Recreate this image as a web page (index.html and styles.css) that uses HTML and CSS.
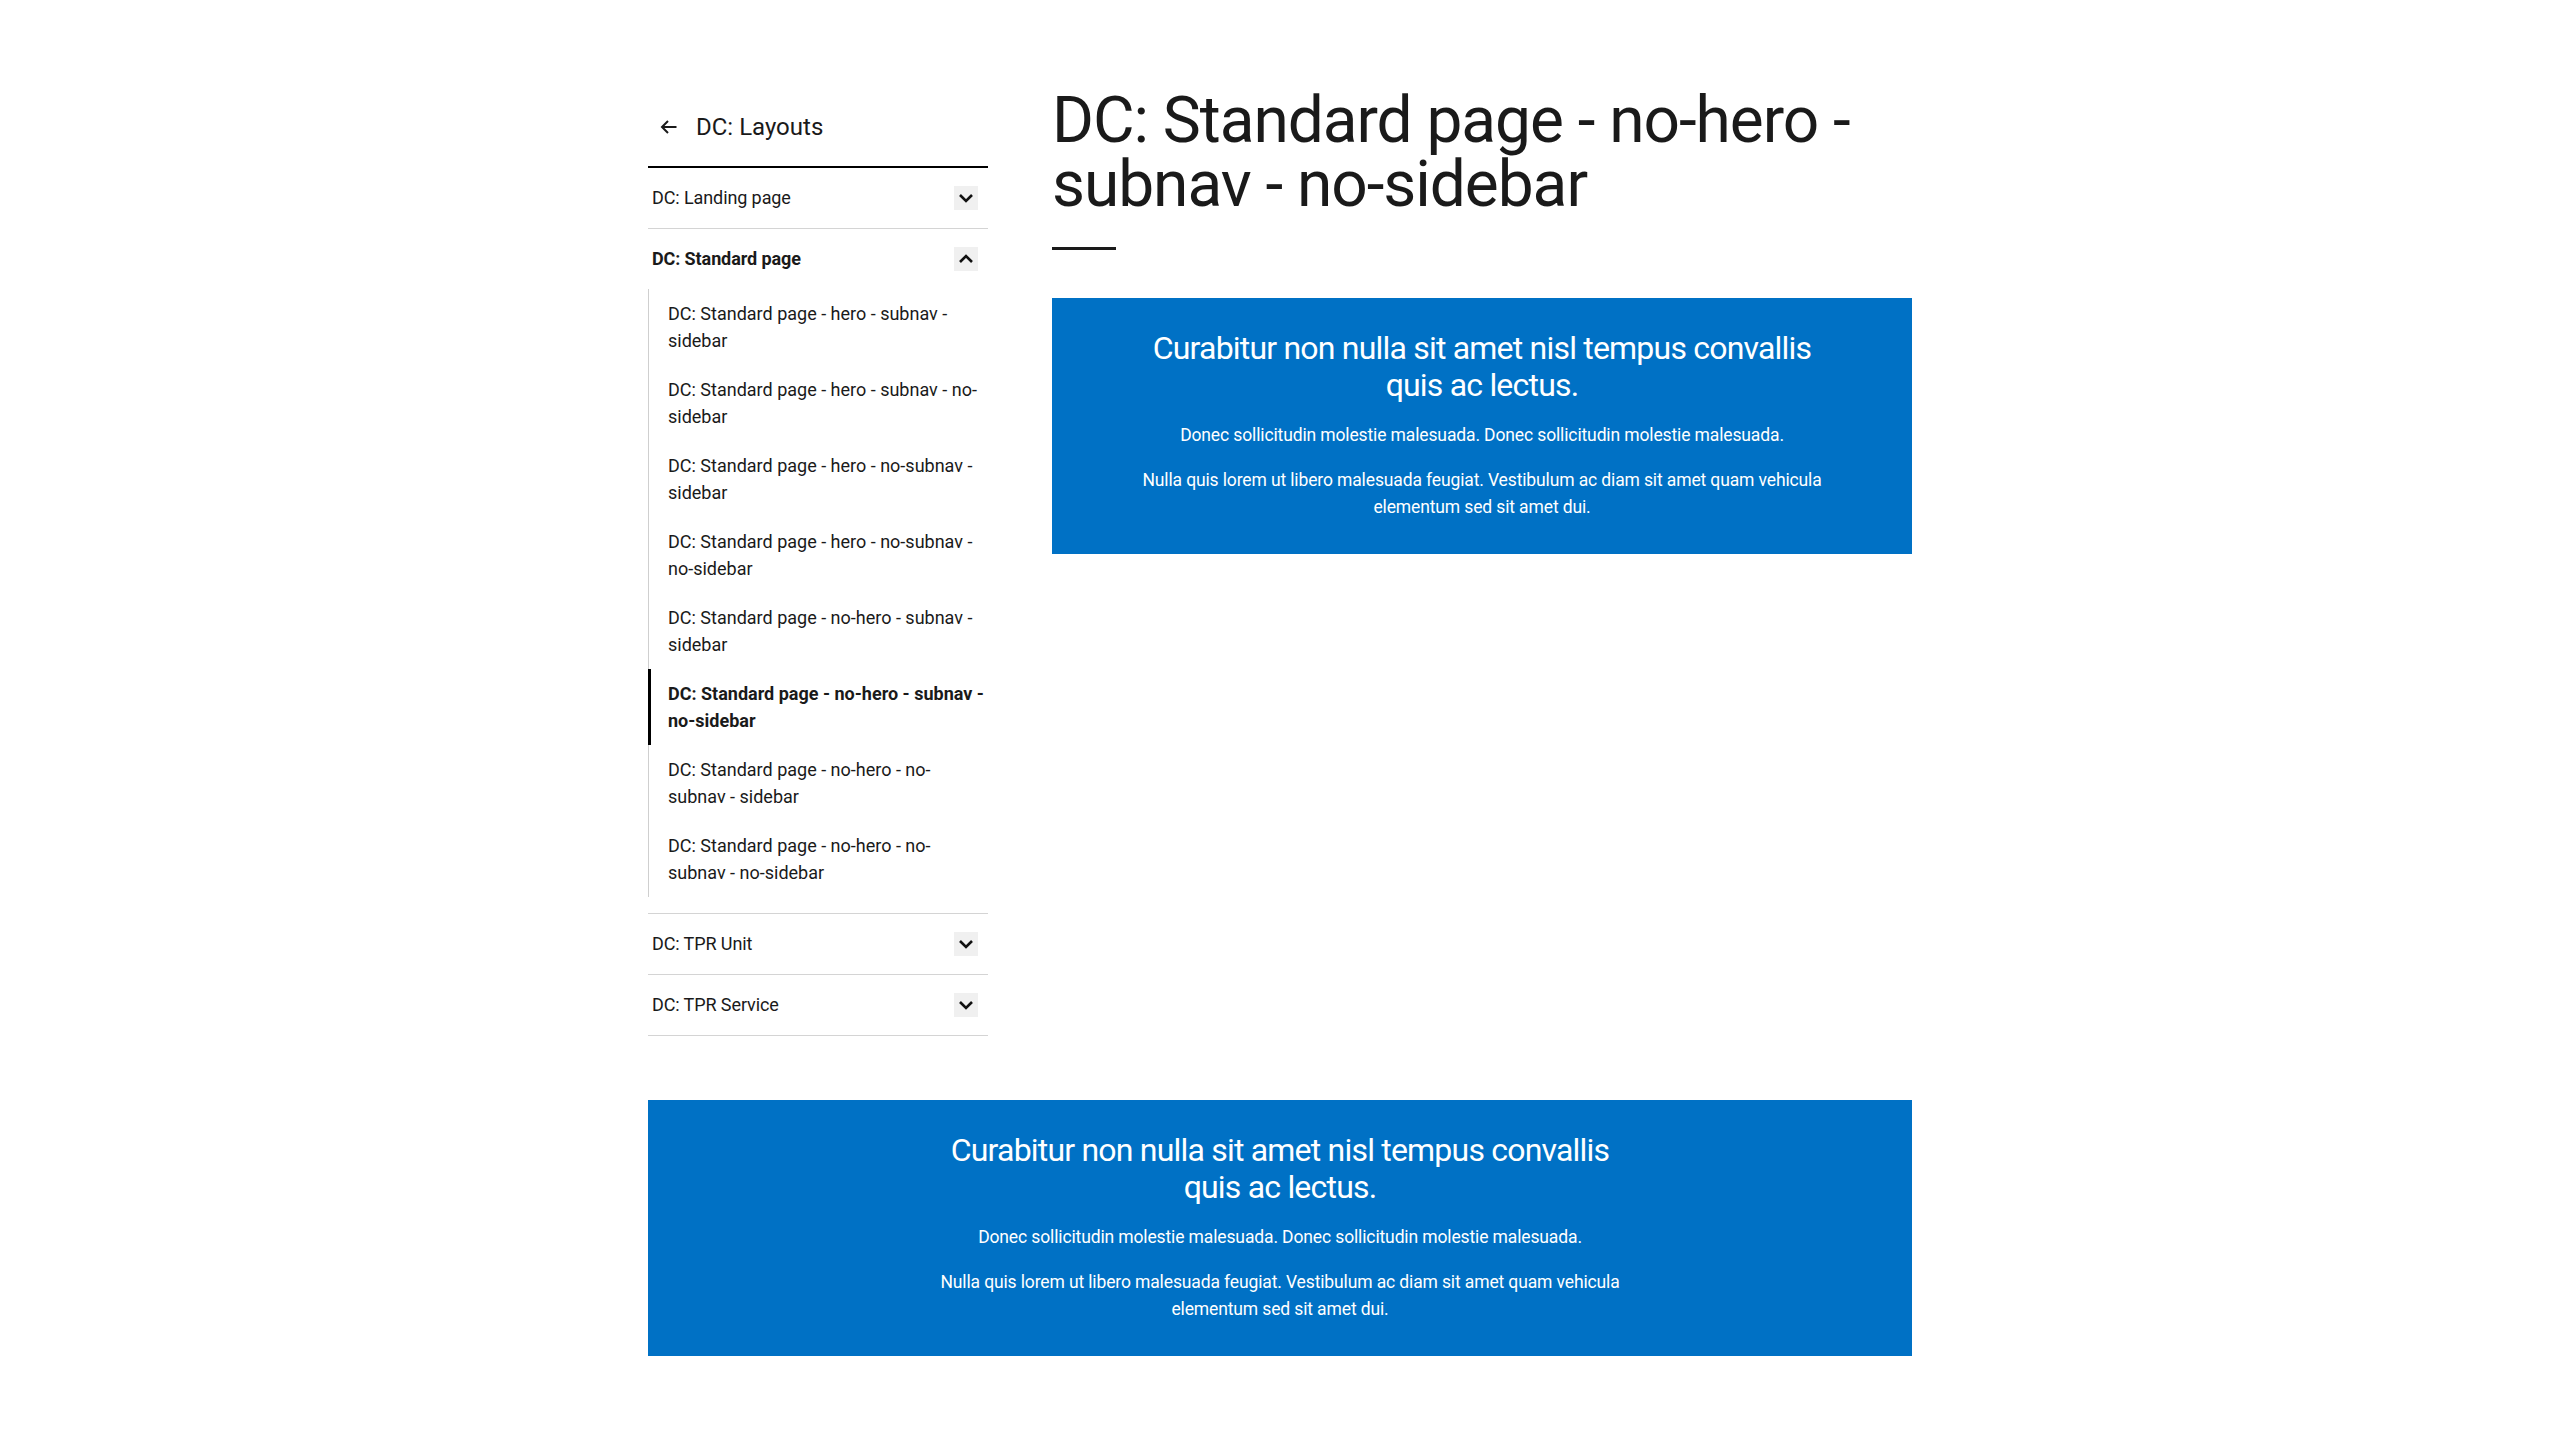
FILE: index.html
```html
<!DOCTYPE html>
<html lang="en">
<head>
<meta charset="utf-8">
<title>DC: Standard page - no-hero - subnav - no-sidebar</title>
<link rel="stylesheet" href="styles.css">
</head>
<body>
<div class="page">
  <div class="layout">
    <nav class="sidebar">
      <div class="side-head">
        <svg class="back" width="17" height="14" viewBox="0 0 17 14"><path d="M16.5 7H2 M8 1L2 7l6 6" fill="none" stroke="#1a1a1a" stroke-width="2"/></svg>
        <span class="side-title">DC: Layouts</span>
      </div>
      <div class="acc">
        <div class="acc-row">
          <span class="acc-label">DC: Landing page</span>
          <span class="chev"><svg width="24" height="24" viewBox="0 0 24 24"><path d="M6 9l6 6 6-6" fill="none" stroke="#111" stroke-width="2.6"/></svg></span>
        </div>
      </div>
      <div class="acc open">
        <div class="acc-row">
          <span class="acc-label bold">DC: Standard page</span>
          <span class="chev"><svg width="24" height="24" viewBox="0 0 24 24"><path d="M6 15l6-6 6 6" fill="none" stroke="#111" stroke-width="2.6"/></svg></span>
        </div>
        <ul class="sub">
          <li class="sub-item">DC: Standard page - hero - subnav - sidebar</li>
          <li class="sub-item">DC: Standard page - hero - subnav - no-sidebar</li>
          <li class="sub-item">DC: Standard page - hero - no-subnav - sidebar</li>
          <li class="sub-item">DC: Standard page - hero - no-subnav - no-sidebar</li>
          <li class="sub-item">DC: Standard page - no-hero - subnav - sidebar</li>
          <li class="sub-item active">DC: Standard page - no-hero - subnav - no-sidebar</li>
          <li class="sub-item">DC: Standard page - no-hero - no-subnav - sidebar</li>
          <li class="sub-item">DC: Standard page - no-hero - no-subnav - no-sidebar</li>
        </ul>
      </div>
      <div class="acc">
        <div class="acc-row">
          <span class="acc-label">DC: TPR Unit</span>
          <span class="chev"><svg width="24" height="24" viewBox="0 0 24 24"><path d="M6 9l6 6 6-6" fill="none" stroke="#111" stroke-width="2.6"/></svg></span>
        </div>
      </div>
      <div class="acc">
        <div class="acc-row">
          <span class="acc-label">DC: TPR Service</span>
          <span class="chev"><svg width="24" height="24" viewBox="0 0 24 24"><path d="M6 9l6 6 6-6" fill="none" stroke="#111" stroke-width="2.6"/></svg></span>
        </div>
      </div>
    </nav>
    <main class="main">
      <h1 class="page-title">DC: Standard page - no-hero - subnav - no-sidebar</h1>
      <div class="title-rule"></div>
      <section class="promo">
        <div class="promo-inner">
          <h2 class="promo-title">Curabitur non nulla sit amet nisl tempus convallis quis ac lectus.</h2>
          <p class="promo-text">Donec sollicitudin molestie malesuada. Donec sollicitudin molestie malesuada.</p>
          <p class="promo-text">Nulla quis lorem ut libero malesuada feugiat. Vestibulum ac diam sit amet quam vehicula elementum sed sit amet dui.</p>
        </div>
      </section>
    </main>
  </div>
  <section class="promo wide">
    <div class="promo-inner">
      <h2 class="promo-title">Curabitur non nulla sit amet nisl tempus convallis quis ac lectus.</h2>
      <p class="promo-text">Donec sollicitudin molestie malesuada. Donec sollicitudin molestie malesuada.</p>
      <p class="promo-text">Nulla quis lorem ut libero malesuada feugiat. Vestibulum ac diam sit amet quam vehicula elementum sed sit amet dui.</p>
    </div>
  </section>
</div>
</body>
</html>
```

FILE: styles.css
```css
* { box-sizing: border-box; }
html, body { margin: 0; padding: 0; background: #fff; }
body {
  font-family: Roboto, "Liberation Sans", Arial, sans-serif;
  color: #1a1a1a;
}
.page {
  width: 1264px;
  margin: 0 auto;
  padding-top: 88px;
  padding-bottom: 84px;
}
.layout {
  display: flex;
  gap: 64px;
  align-items: flex-start;
}
.sidebar {
  width: 340px;
  flex: 0 0 340px;
}
.side-head {
  display: flex;
  align-items: center;
  padding: 23px 12px;
  border-bottom: 2px solid #000;
}
.back { display: block; flex: 0 0 auto; margin-right: 19px; }
.side-title {
  font-size: 24px;
  line-height: 32px;
  color: #1a1a1a;
}
.acc { border-bottom: 1px solid #d4d4d4; }
.acc-row {
  display: flex;
  align-items: center;
  justify-content: space-between;
  padding: 18px 10px 18px 4px;
}
.acc-label {
  font-size: 18px;
  line-height: 24px;
  letter-spacing: -0.1px;
}
.acc-label.bold { font-weight: 700; }
.chev {
  width: 24px;
  height: 24px;
  background: #f0f0f0;
  display: flex;
}
.chev svg { display: block; }
.sub {
  list-style: none;
  margin: 0 0 16px 0;
  padding: 0;
  border-left: 1px solid #cfcfcf;
}
.sub-item {
  position: relative;
  font-size: 18px;
  line-height: 27px;
  padding: 11px 2px 11px 19px;
}
.sub-item.active { font-weight: 700; }
.sub-item.active::before {
  content: "";
  position: absolute;
  left: -1px;
  top: 0;
  bottom: 0;
  width: 3px;
  background: #000;
}
.main {
  flex: 1 1 auto;
  min-width: 0;
}
.page-title {
  margin: 1px 0 30px;
  font-size: 64px;
  line-height: 64px;
  font-weight: 400;
  letter-spacing: -1.05px;
  color: #1a1a1a;
}
.title-rule {
  width: 64px;
  height: 3px;
  background: #1a1a1a;
  margin-bottom: 48px;
}
.promo {
  background: #0071c5;
  color: #fff;
  padding: 32px 24px 33px;
}
.promo.wide { margin-top: 64px; }
.promo-inner {
  max-width: 700px;
  margin: 0 auto;
  text-align: center;
}
.promo-title {
  margin: 0 0 18px;
  font-size: 32px;
  line-height: 37px;
  font-weight: 400;
  letter-spacing: -0.8px;
}
.promo-text {
  margin: 0 0 18px;
  font-size: 17.5px;
  line-height: 27px;
  letter-spacing: -0.13px;
}
.promo-text:last-child { margin-bottom: 0; }
```
